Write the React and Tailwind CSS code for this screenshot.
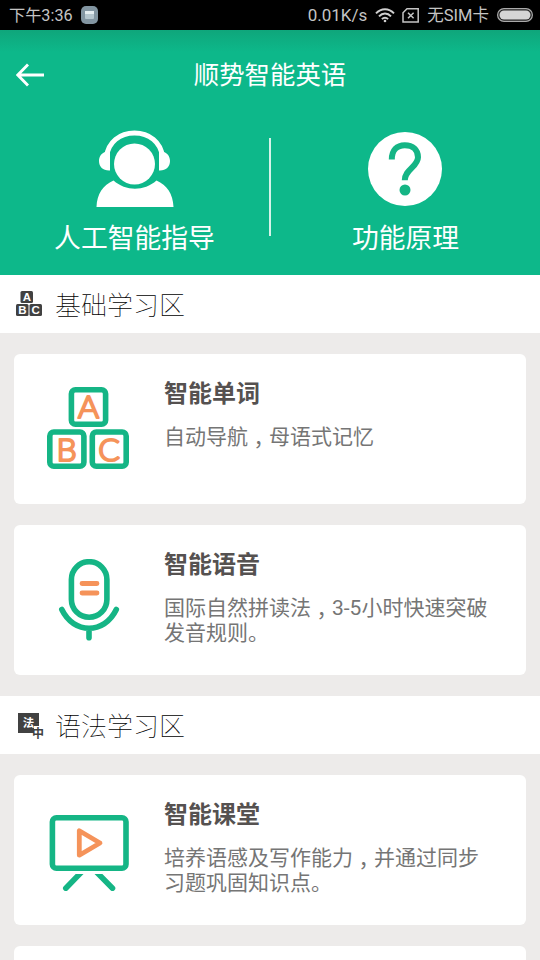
import React from 'react';

const GREEN = '#15b585';
const ORANGE = '#f5935a';

function StatusBar() {
  return (
    <div className="flex h-[30px] shrink-0 items-center bg-black pl-[9px] pr-[7px] text-[16px] leading-[30px] text-[#c4c4c4]">
      <span className="whitespace-nowrap pt-px text-[16.200px]">下午3:36</span>
      <svg className="ml-[8px]" width="17" height="18" viewBox="0 0 17 18">
        <rect width="17" height="18" rx="5" fill="#8295a1" />
        <rect x="4" y="5" width="9" height="8" rx="1" fill="#b5c6ce" />
        <rect x="4" y="5" width="9" height="3" fill="#e4edf0" />
      </svg>
      <div className="flex-1" />
      <span className="whitespace-nowrap text-[17px]">0.01K/s</span>
      <svg className="ml-[8px]" width="20" height="15" viewBox="0 0 20 15" fill="none" stroke="#cfcfcf" strokeWidth="1.9">
        <path d="M1 5.4C6-.2 14-.2 19 5.4M4 8.4c3.4-3.8 8.600-3.800 12 0M6.900 11.200c1.900-2 4.300-2 6.200 0" />
        <circle cx="10" cy="13" r="1.300" fill="#cfcfcf" stroke="none" />
      </svg>
      <svg className="ml-[7px]" width="18" height="15" viewBox="0 0 18 15" fill="none" stroke="#c4c4c4" strokeWidth="1.500">
        <path d="M5 .8h11.200v13.200H1V4.800z" />
        <path d="M6 4.700l5.600 5.600M11.600 4.700L6 10.300" />
      </svg>
      <span className="ml-[7px] whitespace-nowrap pt-px text-[16.500px]">无SIM卡</span>
      <svg className="ml-[8px]" width="36" height="14" viewBox="0 0 36 14">
        <rect x=".6" y=".6" width="34.800" height="12.800" rx="6.400" fill="#222" stroke="#aaa" strokeWidth="1.200" />
        <rect x="2.500" y="2.500" width="31" height="9" rx="4.500" fill="#d5d5d5" />
      </svg>
    </div>
  );
}

function Header() {
  return (
    <header className="h-[245px] shrink-0 bg-[#0db88a] bg-[linear-gradient(to_bottom,#0fa67b_0px,#0db88a_22px)] text-white">
      <div className="grid h-[88px] grid-cols-[60px_1fr_60px] items-center pt-[2px]">
        <svg className="ml-[16px]" width="29" height="24" viewBox="0 0 29 24" fill="none" stroke="white" strokeWidth="2.800">
          <path d="M28 12H2M12 1.500L1.800 12 12 22.500" />
        </svg>
        <h1 className="text-center text-[25.400px] leading-[30px]">顺势智能英语</h1>
      </div>
      <div className="grid grid-cols-[269px_2px_269px]">
        <div className="flex flex-col items-center pt-[12px]">
          <svg width="78" height="78" viewBox="0 0 78 78">
            <path d="M10.500 27C12 12 24 3 38.500 3S65 12 66.500 27" fill="none" stroke="white" strokeWidth="5" />
            <path d="M14 19v21.500C7.500 41 3 37 3 31c0-5 3-8 6-9zM63 19v21.500C69.500 41 74 37 74 31c0-5-3-8-6-9z" fill="white" />
            <circle cx="38.500" cy="34" r="20.500" fill="white" />
            <path d="M.5 77C1 64 7 55 17.500 50.500 30 61.500 48 61.500 60.500 50.500 71 55 77 64 77.500 77z" fill="white" />
          </svg>
          <span className="mt-[14px] whitespace-nowrap text-[26.800px] leading-[34px]">人工智能指导</span>
        </div>
        <div className="mt-[20px] h-[98px] bg-[#d5f3e9]" />
        <div className="flex flex-col items-center pt-[14px]">
          <svg className="mr-px" width="74" height="74" viewBox="0 0 74 74">
            <circle cx="37" cy="37" r="37" fill="white" />
            <path d="M23.800 27.500C23.800 18 29 13.200 36.800 13.200c8 0 13.200 4.500 13.200 12C50 34.500 36.800 37.500 36.800 48.200" fill="none" stroke="#15b585" strokeWidth="6" />
            <circle cx="37" cy="58" r="5.500" fill="#15b585" />
          </svg>
          <span className="mt-[16px] whitespace-nowrap text-[26.800px] leading-[34px]">功能原理</span>
        </div>
      </div>
    </header>
  );
}

function SmallBlocks() {
  return (
    <svg width="28" height="28" viewBox="0 0 28 28" fontFamily="Liberation Sans, sans-serif" fontWeight="700" fontSize="11.500" textAnchor="middle">
      <g fill="#414141">
        <rect x="4.500" y="1" width="12.500" height="12" rx="1.500" />
        <rect x="0" y="14" width="12.500" height="12" rx="1.500" />
        <rect x="13.500" y="14" width="12.500" height="12" rx="1.500" />
      </g>
      <g fill="white">
        <text x="10.800" y="11">A</text>
        <text x="6.300" y="24">B</text>
        <text x="19.700" y="24">C</text>
      </g>
    </svg>
  );
}

function GrammarIcon() {
  return (
    <svg width="28" height="28" viewBox="0 0 28 28" fontFamily="Noto Sans CJK SC, sans-serif" textAnchor="middle" fontWeight="700">
      <path d="M2 2h21v13h-5v7H2z" fill="#414141" />
      <text x="12.500" y="15.500" fontSize="11.500" fill="white">法</text>
      <text x="22" y="26.500" fontSize="12" fill="#414141">中</text>
    </svg>
  );
}

function SectionTitle({ icon, children }) {
  return (
    <div className="flex h-[58px] shrink-0 items-center bg-white pl-[16px]">
      {icon}
      <h2 className="ml-[11px] pt-[5px] text-[26px] font-thin leading-[53px] text-black">{children}</h2>
    </div>
  );
}

function BlocksIcon() {
  return (
    <svg className="-mt-[2px]" width="82" height="82" viewBox="0 0 82 82">
      <g fill="none" stroke={GREEN} strokeWidth="5.600">
        <rect x="24.400" y="2.800" width="34.200" height="34.500" rx="4" />
        <rect x="2.800" y="45" width="34.100" height="34.200" rx="4" />
        <rect x="45.300" y="45" width="33.900" height="34.200" rx="4" />
      </g>
      <g fill={ORANGE} stroke={ORANGE} strokeWidth="2.200" strokeLinejoin="round" fontFamily="Lato, sans-serif" fontWeight="300" fontSize="32" textAnchor="middle">
        <text x="41.500" y="31">A</text>
        <text x="19.500" y="73.500">B</text>
        <text x="62" y="73.500">C</text>
      </g>
    </svg>
  );
}

function MicIcon() {
  return (
    <svg width="82" height="82" viewBox="0 0 82 82" fill="none" strokeLinecap="round">
      <rect x="24.400" y="2.700" width="35.500" height="55.600" rx="17.750" stroke={GREEN} strokeWidth="5.600" />
      <path d="M14.800 50.500c12 25 42.500 25 54.500 0M42 70v8.800" stroke={GREEN} strokeWidth="5.600" />
      <path d="M35 24.500h15M35 34h15" stroke={ORANGE} strokeWidth="4.800" />
    </svg>
  );
}

function BoardIcon() {
  return (
    <svg width="82" height="82" viewBox="0 0 82 82" fill="none">
      <clipPath id="board-legs">
        <rect x="0" y="65" width="82" height="17" />
      </clipPath>
      <rect x="5.400" y="8.700" width="73.600" height="50.600" rx="4" stroke={GREEN} strokeWidth="5.600" />
      <path d="M32.300 21.800v24.400L53 34z" stroke={ORANGE} strokeWidth="4.800" strokeLinejoin="round" />
      <path d="M36 61.500L18.800 79.200M48 61.500l17.500 17.700" stroke={GREEN} strokeWidth="5.600" strokeLinecap="round" clipPath="url(#board-legs)" />
    </svg>
  );
}

/* The centred comma form, lowered to the baseline. */
function Comma() {
  return <span className="inline-block translate-y-[8px] leading-none font-['Noto_Sans_CJK_TC']">，</span>;
}

function Card({ icon, title, children }) {
  return (
    <article className="flex h-[150px] shrink-0 rounded-[6px] bg-white">
      <div className="flex w-[150px] shrink-0 items-center justify-center pr-[2px]">{icon}</div>
      <div className="pt-[24px]">
        <h3 className="text-[24px] font-bold leading-[32px] text-[#555150]">{title}</h3>
        <p className="mt-[15px] whitespace-nowrap text-[21px] leading-[25px] text-[#757575]">{children}</p>
      </div>
    </article>
  );
}

export default function App() {
  return (
    <div className="flex h-[960px] w-[540px] flex-col overflow-hidden bg-[#edebea] font-[Roboto,'Noto_Sans_CJK_SC',sans-serif]">
      <StatusBar />
      <Header />
      <SectionTitle icon={<SmallBlocks />}>基础学习区</SectionTitle>
      <div className="flex shrink-0 flex-col gap-[21px] px-[14px] py-[21px]">
        <Card icon={<BlocksIcon />} title="智能单词">
          自动导航<Comma />母语式记忆
        </Card>
        <Card icon={<MicIcon />} title="智能语音">
          国际自然拼读法<Comma />3-5小时快速突破
          <br />
          发音规则。
        </Card>
      </div>
      <SectionTitle icon={<GrammarIcon />}>语法学习区</SectionTitle>
      <div className="flex shrink-0 flex-col gap-[21px] px-[14px] py-[21px]">
        <Card icon={<BoardIcon />} title="智能课堂">
          培养语感及写作能力<Comma />并通过同步
          <br />
          习题巩固知识点。
        </Card>
        <Card />
      </div>
    </div>
  );
}
